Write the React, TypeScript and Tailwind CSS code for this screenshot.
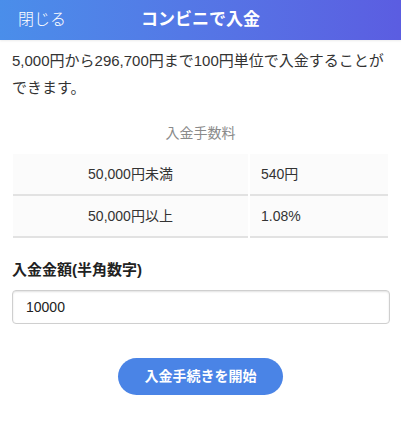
import React from "react";

const font = { fontFamily: '"Liberation Sans", "Noto Sans CJK JP", sans-serif' };

export default function App() {
  return (
    <div className="w-[401px] h-[426px] bg-white text-[#333333]" style={font}>
      <header className="relative h-10 flex items-center justify-center bg-gradient-to-r from-[#4a8eea] to-[#5b5de1] shadow-[0_1px_2px_rgba(0,0,0,0.08)]">
        <button className="absolute left-[18px] top-0 h-10 flex items-center text-[16px] font-light text-white">
          閉じる
        </button>
        <h1 className="text-[17px] font-bold text-white">コンビニで入金</h1>
      </header>

      <p className="px-3 pt-[7px] text-[15px] leading-[27px]">
        5,000円から296,700円まで100円単位で入金することができます。
      </p>

      <div className="mt-[22px] text-center text-[14px] leading-5 text-[#8a8a8a]">入金手数料</div>

      <div className="mx-[13px] mt-[11px] grid grid-cols-[235px_1fr] gap-x-[2px] text-[14px]">
        <div className="h-[42px] flex items-center justify-center bg-[#fbfbfb] border-b-2 border-[#e2e2e2]">50,000円未満</div>
        <div className="h-[42px] flex items-center pl-[11px] bg-[#fbfbfb] border-b-2 border-[#e2e2e2]">540円</div>
        <div className="h-[42px] flex items-center justify-center bg-[#fbfbfb] border-b-2 border-[#e2e2e2]">50,000円以上</div>
        <div className="h-[42px] flex items-center pl-[11px] bg-[#fbfbfb] border-b-2 border-[#e2e2e2]">1.08%</div>
      </div>

      <label className="block mt-[22px] px-3 text-[15px] font-bold leading-5 text-[#222222]">入金金額(半角数字)</label>

      <div className="mt-[10px] ml-3 mr-[11px]">
        <input
          type="text"
          defaultValue="10000"
          className="w-full h-[34px] rounded-[4px] border border-[#cfcfcf] bg-white pl-[13px] text-[14px] text-[#222222] shadow-[inset_0_1px_2px_rgba(0,0,0,0.12)] outline-none"
          style={font}
        />
      </div>

      <div className="mt-[34px] flex justify-center">
        <button className="w-[165px] h-[37px] rounded-full bg-[#4a84e6] text-[14px] font-bold text-white">
          入金手続きを開始
        </button>
      </div>
    </div>
  );
}
